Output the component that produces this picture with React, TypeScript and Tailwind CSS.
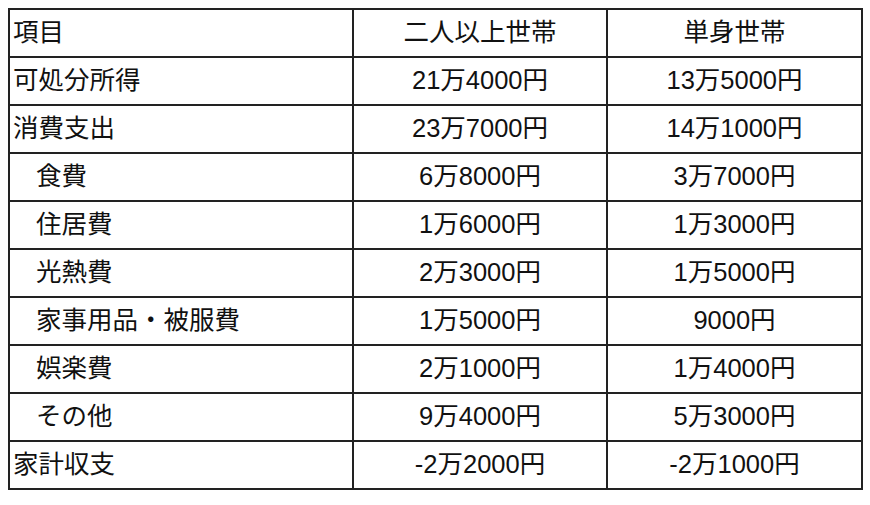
const rows = [
  { label: "可処分所得", a: "21万4000円", b: "13万5000円" },
  { label: "消費支出", a: "23万7000円", b: "14万1000円" },
  { label: "食費", a: "6万8000円", b: "3万7000円", sub: true },
  { label: "住居費", a: "1万6000円", b: "1万3000円", sub: true },
  { label: "光熱費", a: "2万3000円", b: "1万5000円", sub: true },
  { label: "家事用品・被服費", a: "1万5000円", b: "9000円", sub: true },
  { label: "娯楽費", a: "2万1000円", b: "1万4000円", sub: true },
  { label: "その他", a: "9万4000円", b: "5万3000円", sub: true },
  { label: "家計収支", a: "-2万2000円", b: "-2万1000円" },
];

export default function App() {
  return (
    <div className="h-[505px] w-[870px] bg-white pl-[8px] pt-[8px] font-['Liberation_Sans','Noto_Sans_CJK_JP',sans-serif] text-[25.5px] text-[#111]">
      <table className="w-[853px] table-fixed border-collapse">
        <colgroup>
          <col className="w-[344px]" />
          <col className="w-[254px]" />
          <col className="w-[255px]" />
        </colgroup>
        <tbody>
          <tr className="h-[48px]">
            <td className="border-2 border-[#222] px-[3px] leading-none">項目</td>
            <td className="border-2 border-[#222] text-center leading-none">二人以上世帯</td>
            <td className="border-2 border-[#222] text-center leading-none">単身世帯</td>
          </tr>
          {rows.map((r) => (
            <tr key={r.label} className="h-[48px]">
              <td
                className={`border-2 border-[#222] leading-none ${
                  r.sub ? "pl-[26px]" : "px-[3px]"
                }`}
              >
                {r.label}
              </td>
              <td className="border-2 border-[#222] text-center leading-none">{r.a}</td>
              <td className="border-2 border-[#222] text-center leading-none">{r.b}</td>
            </tr>
          ))}
        </tbody>
      </table>
    </div>
  );
}
